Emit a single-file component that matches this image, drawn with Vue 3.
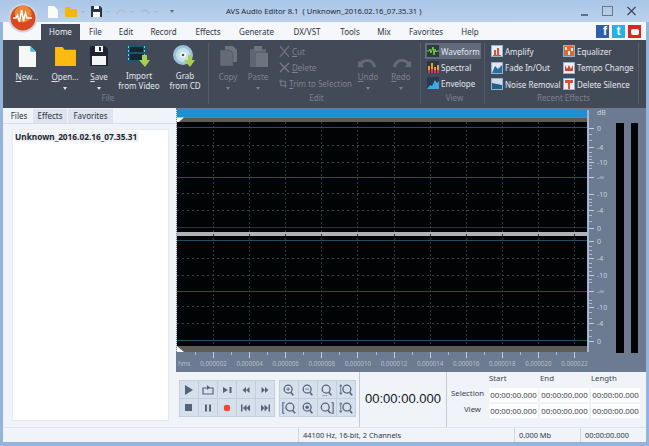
<template>
  <div class="window">
    <header class="titlebar">
      <div class="logo">
        <svg width="30" height="30" viewBox="0 0 30 30">
          <circle cx="15" cy="15" r="14.500" fill="#c9d6e6" />
          <circle cx="15" cy="15" r="12.500" fill="#d9481f" />
          <circle cx="15" cy="11" r="8.500" fill="#f2a244" opacity="0.7" />
          <path d="M5 15h3l1.500-3 2 7 2-12 2 11 2-8 1.500 5h5" fill="none" stroke="#fff" stroke-width="1.500" />
        </svg>
      </div>
      <div class="qat">
        <svg width="10" height="12" viewBox="0 0 10 12"><path d="M0 0h6l4 4v8H0z" fill="#fbfbf6" /></svg>
        <svg class="qat-folder" width="12" height="10" viewBox="0 0 12 10"><path d="M0 0h5l1 2h6v8H0z" fill="#f5b800" /></svg>
        <span class="qat-arrow light"></span>
        <svg class="qat-save" width="11" height="11" viewBox="0 0 11 11"><path d="M0 0h9l2 2v9H0z" fill="#2c3442" /><path d="M3 0h5v3H3zM2 6h7v5H2z" fill="#fff" /></svg>
        <span class="qat-arrow light"></span>
        <svg class="qat-undo" width="10" height="7" viewBox="0 0 10 7"><path d="M1 6c1-4 5-5 8-2" fill="none" stroke="#a9bdd8" stroke-width="1.500" /></svg>
        <span class="qat-arrow light"></span>
        <svg class="qat-undo" width="10" height="7" viewBox="0 0 10 7"><path d="M9 6C8 2 4 1 1 4" fill="none" stroke="#a9bdd8" stroke-width="1.500" /></svg>
        <span class="qat-arrow light"></span>
        <span class="qat-arrow end"></span>
      </div>
      <div class="title">AVS Audio Editor 8.1&nbsp; ( Unknown_2016.02.16_07.35.31 )</div>
      <div class="winbtns">
        <svg width="9" height="12" viewBox="0 0 9 12"><path d="M1 10h7" stroke="#44505f" stroke-width="1.500" /></svg>
        <svg width="11" height="12" viewBox="0 0 11 12"><rect x="0.500" y="1.500" width="10" height="9" fill="none" stroke="#6a7888" /></svg>
        <svg width="11" height="12" viewBox="0 0 11 12"><path d="M1.500 2l8 8M9.500 2l-8 8" stroke="#3c4655" stroke-width="1.200" /></svg>
      </div>
    </header>

    <nav class="tabs">
      <span v-for="t in menuTabs" :key="t.name" class="tab" :class="{ active: t.name === 'Home' }" :style="{ width: t.w + 'px' }">{{ t.name }}</span>
      <div class="social">
        <span class="soc fb">f</span>
        <span class="soc tw">t</span>
        <span class="soc yt"><i></i></span>
      </div>
    </nav>

    <section class="ribbon">
      <div class="group g-file">
        <div class="group-body">
          <div v-for="b in fileBtns" :key="b.label" class="big" :style="{ width: b.w + 'px' }">
            <div class="big-icon">
              <svg v-if="b.icon === 'new'" width="18" height="21" viewBox="0 0 19 22"><path d="M1 0h12l6 6v16H1z" fill="#f6f7f7" /><path d="M13 0l6 6h-6z" fill="#48b4e6" /></svg>
              <svg v-if="b.icon === 'open'" width="21" height="19" viewBox="0 0 22 20"><path d="M0 0h8l2 3h12v17H0z" fill="#fdbb12" /></svg>
              <svg v-if="b.icon === 'save'" width="18" height="20" viewBox="0 0 18 20"><path d="M1 0h14l3 3v17H0V1z" fill="#1f2530" /><path d="M5 0h8v6H5z" fill="#f4f4f4" /><path d="M9 1h2v4H9z" fill="#1f2530" /><path d="M2 10h14v9H2z" fill="#f4f4f4" /></svg>
              <svg v-if="b.icon === 'video'" width="24" height="22" viewBox="0 0 24 22"><path d="M0 0h19v17H0z" fill="#17586f" /><path d="M3 2h13v5H3zM3 9h13v6H3z" fill="#16282f" /><path d="M1 1h1v2H1zM1 5h1v2H1zM1 9h1v2H1zM1 13h1v2H1zM17 1h1v2h-1zM17 5h1v2h-1zM17 9h1v2h-1zM17 13h1v2h-1z" fill="#6fd0e8" /><path d="M15 10h5v5h3l-5 7-6-7h3z" fill="#a8cf52" /></svg>
              <svg v-if="b.icon === 'cd'" width="24" height="22" viewBox="0 0 24 22"><circle cx="10" cy="10" r="10" fill="#9ac4d4" /><circle cx="10" cy="10" r="7" fill="#c4e0ea" /><circle cx="10" cy="10" r="3" fill="#f6f8f8" /><circle cx="10" cy="10" r="1.300" fill="#3f5a66" /><path d="M15 10h4v5h3l-5 7-6-7h4z" fill="#a8cf52" /></svg>
            </div>
            <div class="big-label"><u v-if="b.ul">{{ b.label[0] }}</u><template v-else>{{ b.label[0] }}</template>{{ b.label.slice(1) }}<template v-if="b.second"><br />{{ b.second }}</template></div>
            <span v-if="b.arrow" class="drop"></span>
          </div>
        </div>
        <div class="group-name">File</div>
      </div>

      <div class="group g-edit">
        <div class="group-body">
          <div class="big off" style="width: 30px">
            <div class="big-icon">
              <svg width="17" height="20" viewBox="0 0 17 20"><path d="M5 0h8l4 4v12H5z" fill="#6d737f" /><path d="M0 4h10l3 3v13H0z" fill="#646a76" stroke="#4e5461" stroke-width="0.700" /></svg>
            </div>
            <div class="big-label">Copy</div>
            <span class="drop"></span>
          </div>
          <div class="big off" style="width: 30px">
            <div class="big-icon">
              <svg width="20" height="21" viewBox="0 0 20 21"><path d="M2 3h16v18H2z" fill="#5f6571" /><path d="M6 0h8v5H6z" fill="#6d737f" /><path d="M8 7h12v14H8z" fill="#6d737f" /></svg>
            </div>
            <div class="big-label">Paste</div>
            <span class="drop"></span>
          </div>
          <div class="small-col edit-col">
            <div class="small off"><svg width="11" height="11" viewBox="0 0 11 11"><path d="M1 0l9 11M10 0L1 11" stroke="#6d737f" stroke-width="1.200" /></svg><span><u>C</u>ut</span></div>
            <div class="small off"><svg width="11" height="11" viewBox="0 0 11 11"><path d="M1 1l9 9M10 1l-9 9" stroke="#757c88" stroke-width="1.400" /></svg><span><u>D</u>elete</span></div>
            <div class="small off"><svg width="11" height="11" viewBox="0 0 11 11"><path d="M2.500 0v8.500H11M0 2.500h8.500V11" fill="none" stroke="#757c88" stroke-width="1.400" /></svg><span><u>T</u>rim to Selection</span></div>
          </div>
          <div class="big off undo" style="width: 32px">
            <div class="big-icon">
              <svg width="20" height="14" viewBox="0 0 20 14"><path d="M2 13C3 6 11 2 18 8l2-1v6h-6l2-3C11 6 6 8 5 13z" fill="#656b77" transform="matrix(-1 0 0 1 20 0)" /></svg>
            </div>
            <div class="big-label"><u>U</u>ndo</div>
            <span class="drop"></span>
          </div>
          <div class="big off undo" style="width: 34px">
            <div class="big-icon">
              <svg width="20" height="14" viewBox="0 0 20 14"><path d="M2 13C3 6 11 2 18 8l2-1v6h-6l2-3C11 6 6 8 5 13z" fill="#656b77" /></svg>
            </div>
            <div class="big-label"><u>R</u>edo</div>
            <span class="drop"></span>
          </div>
        </div>
        <div class="group-name">Edit</div>
      </div>

      <div class="group g-view">
        <div class="group-body">
          <div class="small-col">
            <div class="small on">
              <svg width="12" height="12" viewBox="0 0 12 12"><rect width="12" height="12" fill="#2c3a42" /><path d="M0 6h2l1-2 1 4 2-6 1 8 1-6 1 3 1-1h2" fill="none" stroke="#7fd044" /></svg>
              <span>Waveform</span>
            </div>
            <div class="small">
              <svg width="12" height="12" viewBox="0 0 12 12"><rect width="12" height="12" fill="#2f3542" /><path d="M1 12V5h2v7zM4 12V2h2v10zM7 12V6h2v6zM10 12V4h2v8z" fill="#e8a030" /><path d="M1 12V9h2v3zM4 12V8h2v4zM7 12V9h2v3zM10 12V9h2v3z" fill="#d83a5a" /></svg>
              <span>Spectral</span>
            </div>
            <div class="small">
              <svg width="12" height="12" viewBox="0 0 12 12"><rect width="12" height="12" fill="#263a52" /><path d="M0 12l3-4 2 1 3-6 2 3 2-2v8z" fill="#3ea8e0" /></svg>
              <span>Envelope</span>
            </div>
          </div>
        </div>
        <div class="group-name">View</div>
      </div>

      <div class="group g-recent">
        <div class="group-body recent-grid">
          <div v-for="fx in recentFx" :key="fx.name" class="small fx">
            <svg width="12" height="12" viewBox="0 0 12 12">
              <rect x="0.500" y="0.500" width="11" height="11" :fill="fx.bg" stroke="#8fb4d4" />
              <path :d="fx.d" :fill="fx.color" />
            </svg>
            <span>{{ fx.name }}</span>
          </div>
        </div>
        <div class="group-name">Recent Effects</div>
      </div>
    </section>

    <main class="main">
      <aside class="left">
        <div class="left-tabs">
          <span class="ltab active">Files</span>
          <span class="ltab effects">Effects</span>
          <span class="ltab favs">Favorites</span>
        </div>
        <div class="file-list">
          <span class="file-item">Unknown_2016.02.16_07.35.31</span>
        </div>
      </aside>

      <div class="right">
        <svg class="scope" width="470" height="264" viewBox="176 108 470 264">
          <rect x="176" y="108" width="470" height="264" fill="#6d7b92" />
          <rect x="177" y="110" width="410" height="7" fill="#1d8fd2" />
          <rect x="177" y="118" width="410" height="4" fill="#5d5b58" />
          <path d="M177 117.500l7 0-7 6z" fill="#fff" />
          <rect x="177" y="122" width="410" height="224" fill="#020304" />
          <rect x="177" y="227" width="410" height="1" fill="#25343c" />
          <rect x="177" y="232" width="410" height="4" fill="#b0b2b6" />
          <rect x="177" y="346" width="410" height="6" fill="#5d5b58" />
          <path d="M177 346l7 6h-7z" fill="#fff" />

          <line v-for="x in gridX" :key="'v' + x" :x1="x" :x2="x" y1="122" y2="346" stroke="#2a3a3e" stroke-dasharray="2 2" />
          <line v-for="y in gridY" :key="'h' + y" x1="177" x2="587" :y1="y" :y2="y" stroke="#3a4044" stroke-dasharray="2 3" />
          <line v-for="y in solidY" :key="'s' + y" x1="177" x2="587" :y1="y + 0.5" :y2="y + 0.5" stroke="#1f4f63" />
          <line x1="176.500" x2="176.500" y1="110" y2="352" stroke="#e8eef4" stroke-dasharray="1 1" />

          <rect x="587" y="110" width="2" height="242" fill="#9fb6d8" />
          <g v-for="d in dbMarks" :key="'d' + d.y">
            <line x1="589" x2="594" :y1="d.y + 0.5" :y2="d.y + 0.5" stroke="#c3ccd8" />
            <text x="597" :y="d.y + 3" class="db">{{ d.t }}</text>
          </g>
          <line v-for="y in dbTicks" :key="'dt' + y" x1="589" x2="592" :y1="y + 0.5" :y2="y + 0.5" stroke="#aeb8c6" />
          <text x="597" y="115" class="db">dB</text>
          <rect x="616" y="123" width="8" height="230" fill="#020304" />
          <rect x="631" y="123" width="7" height="230" fill="#020304" />

          <line v-for="x in gridX" :key="'r' + x" :x1="x" :x2="x" y1="352" y2="358" stroke="#c3ccd8" />
          <line v-for="x in gridX" :key="'rh' + x" :x1="x - 18" :x2="x - 18" y1="352" y2="355" stroke="#aeb8c6" />
          <text x="178" y="366" class="ruler">hms</text>
          <text v-for="(l, i) in rulerLabels" :key="l" :x="213.500 + i * 36.100" y="366" class="ruler" text-anchor="middle">{{ l }}</text>
        </svg>

        <div class="transport">
          <div class="btn-grid five">
            <button v-for="b in playBtns" :key="b.k" class="tbtn" type="button">
              <svg width="14" height="14" viewBox="0 0 14 14" v-html="b.svg"></svg>
            </button>
          </div>
          <div class="btn-grid four">
            <button v-for="b in zoomBtns" :key="b.k" class="tbtn" type="button">
              <svg width="14" height="14" viewBox="0 0 16 16" v-html="b.svg"></svg>
            </button>
          </div>
          <div class="clock">00:00:00.000</div>
          <div class="times">
            <span></span><span class="th">Start</span><span class="th">End</span><span class="th">Length</span>
            <span class="rl">Selection</span><span class="tf">00:00:00.000</span><span class="tf">00:00:00.000</span><span class="tf">00:00:00.000</span>
            <span class="rl">View</span><span class="tf">00:00:00.000</span><span class="tf">00:00:00.000</span><span class="tf">00:00:00.000</span>
          </div>
        </div>
      </div>
    </main>

    <footer class="status">
      <span class="st st1"></span>
      <span class="st st2">44100 Hz, 16-bit, 2 Channels</span>
      <span class="st st3">0.000 Mb</span>
      <span class="st st4">00:00:00.000</span>
    </footer>
  </div>
</template>

<script setup>
const menuTabs = [
  { name: 'Home', w: 39 }, { name: 'File', w: 31 }, { name: 'Edit', w: 30 }, { name: 'Record', w: 45 },
  { name: 'Effects', w: 44 }, { name: 'Generate', w: 53 }, { name: 'DX/VST', w: 48 }, { name: 'Tools', w: 38 },
  { name: 'Mix', w: 30 }, { name: 'Favorites', w: 54 }, { name: 'Help', w: 34 },
]

const fileBtns = [
  { label: 'New...', icon: 'new', w: 38, ul: true },
  { label: 'Open...', icon: 'open', w: 38, arrow: true, ul: true },
  { label: 'Save', icon: 'save', w: 30, arrow: true, ul: true },
  { label: 'Import', second: 'from Video', icon: 'video', w: 50 },
  { label: 'Grab', second: 'from CD', icon: 'cd', w: 42 },
]

const recentFx = [
  { name: 'Amplify', bg: '#e8eef4', color: '#d8503a', d: 'M3 10V5h2v5zM6 10V3h2v7zM2 10h8v1H2z' },
  { name: 'Equalizer', bg: '#e06a30', color: '#f4efe4', d: 'M2 2h2v3H2zM5 6h2v4H5zM8 3h2v3H8z' },
  { name: 'Fade In/Out', bg: '#dfe8f0', color: '#2a6c9c', d: 'M1 11l3-7 3 3 4-4v8z' },
  { name: 'Tempo Change', bg: '#f0f2f4', color: '#d8403a', d: 'M2 9V3l2 4 2-4 2 4 2-4v6z' },
  { name: 'Noise Removal', bg: '#cfdde8', color: '#245f88', d: 'M1 5l10 2v4H1z' },
  { name: 'Delete Silence', bg: '#eef0f2', color: '#e0503a', d: 'M2 2h8v3H7v6H5V5H2z' },
]

const gridX = Array.from({ length: 11 }, (_, i) => Math.round(213 + i * 36.1) + 0.5)
const gridY = [145.5, 162.5, 193.5, 210.5, 258.5, 275.5, 306.5, 323.5]
const solidY = [127, 177, 240, 291, 340]
const dbMarks = [
  { y: 128, t: '0' }, { y: 147, t: '-4' }, { y: 162, t: '-10' }, { y: 177, t: '-∞' }, { y: 194, t: '-10' }, { y: 210, t: '-4' }, { y: 228, t: '0' },
  { y: 241, t: '0' }, { y: 258, t: '-4' }, { y: 275, t: '-10' }, { y: 291, t: '-∞' }, { y: 307, t: '-10' }, { y: 323, t: '-4' }, { y: 341, t: '0' },
]
const dbTicks = [134, 140, 152, 156, 159, 165, 168, 199, 202, 205, 215, 221, 246, 250, 254, 263, 267, 271, 279, 282, 300, 303, 312, 318, 330, 336]
const rulerLabels = Array.from({ length: 11 }, (_, i) => '0.0000' + String((i + 1) * 2).padStart(2, '0'))

const ic = '#55637a'
const playBtns = [
  { k: 'play', svg: `<path d="M3 2l8 5-8 5z" fill="${ic}"/>` },
  { k: 'loop', svg: `<path d="M2 5h10v6H2z" fill="none" stroke="${ic}" stroke-width="1.200"/><path d="M6 2v5l3-2.500z" fill="${ic}"/>` },
  { k: 'next', svg: `<path d="M3 4l5 3-5 3z M9.500 4h2v6h-2z" fill="${ic}"/>` },
  { k: 'rew', svg: `<path d="M7 4v6L3.500 7zM10.500 4v6L7 7z" fill="${ic}"/>` },
  { k: 'ffw', svg: `<path d="M3.500 4v6L7 7zM7 4v6l3.500-3z" fill="${ic}"/>` },
  { k: 'stop', svg: `<path d="M3 3h7v7H3z" fill="${ic}"/>` },
  { k: 'pause', svg: `<path d="M4 3.500h2v7H4zM8 3.500h2v7H8z" fill="${ic}"/>` },
  { k: 'rec', svg: `<circle cx="7" cy="7" r="3.200" fill="#f2472a"/>` },
  { k: 'first', svg: `<path d="M2 3.500h1.500v7H2zM7.500 3.500v7L4 7zM11 3.500v7L7.500 7z" fill="${ic}"/>` },
  { k: 'last', svg: `<path d="M12 3.500h-1.500v7H12zM3 3.500v7L6.500 7zM6.500 3.500v7L10 7z" fill="${ic}"/>` },
]

const lens = (cx, extra = '') => `<circle cx="${cx}" cy="7" r="4.500" fill="none" stroke="${ic}" stroke-width="1.500"/><path d="M${cx + 3} 10.500l3 3.500" stroke="${ic}" stroke-width="1.800"/>${extra}`
const zoomBtns = [
  { k: 'in', svg: lens(7, `<path d="M5 7h4M7 5v4" stroke="${ic}"/>`) },
  { k: 'out', svg: lens(7, `<path d="M5 7h4" stroke="${ic}"/>`) },
  { k: 'sel', svg: lens(7, `<path d="M3 14.500h6" stroke="${ic}" stroke-dasharray="1 1"/>`) },
  { k: 'vert', svg: lens(9, `<path d="M2 2v11M0.500 4L2 2l1.500 2M0.500 11L2 13l1.500-2" fill="none" stroke="${ic}"/>`) },
  { k: 'left', svg: lens(9, `<path d="M3 2H1v12h2" fill="none" stroke="${ic}" stroke-width="1.300"/>`) },
  { k: 'all', svg: lens(7, `<circle cx="7" cy="7" r="2" fill="${ic}"/>`) },
  { k: 'right', svg: lens(6, `<path d="M13 2h2v12h-2" fill="none" stroke="${ic}" stroke-width="1.300"/>`) },
  { k: 'vert2', svg: lens(9, `<path d="M2 2v11M0.500 4L2 2l1.500 2M0.500 11L2 13l1.500-2" fill="none" stroke="${ic}"/>`) },
]
</script>

<style scoped>
.window {
  width: 649px;
  height: 446px;
  box-sizing: border-box;
  display: flex;
  flex-direction: column;
  background: #93b4dc;
  padding: 0 3px 4px;
  font-family: "Noto Sans", "Open Sans", sans-serif;
  font-size: 8px;
  color: #2a3340;
  overflow: hidden;
}
.titlebar {
  height: 22px;
  display: flex;
  align-items: center;
  position: relative;
  margin: 0 -3px;
  background: linear-gradient(#a9c5e7, #bcd2ec);
}
.logo {
  position: absolute;
  left: 8px;
  top: 3px;
  z-index: 2;
  height: 30px;
}
.qat {
  display: flex;
  align-items: center;
  margin-left: 48px;
  width: 150px;
  margin-top: 1px;
}
.qat-folder { margin-left: 7px; }
.qat-save { margin-left: 6px; }
.qat-undo { margin-left: 6px; }
.qat-arrow {
  width: 0;
  height: 0;
  margin-left: 4px;
  border-left: 2px solid transparent;
  border-right: 2px solid transparent;
  border-top: 2px solid #7d8ea6;
}
.qat-arrow.light { border-top-color: #a0b6d4; }
.qat-arrow.end { margin-left: 12px; border-top-color: #5e6c7e; border-left-width: 2px; border-right-width: 2px; border-top-width: 3px; }
.title {
  position: absolute;
  left: 226px;
  top: 5px;
  font-size: 7.650px;
  line-height: 12px;
  white-space: nowrap;
  color: #1f2835;
}
.winbtns {
  margin-left: auto;
  margin-right: 12px;
  display: flex;
  gap: 13px;
  align-items: center;
}
.tabs {
  height: 18px;
  display: flex;
  background: #f5f7fb;
  padding-left: 38px;
  align-items: stretch;
}
.tab {
  text-align: center;
  line-height: 15px;
  margin-top: 2px;
  color: #2d3644;
}
.tab.active {
  background: #434a57;
  color: #eef1f5;
}
.social {
  margin-left: auto;
  margin-right: 5px;
  display: flex;
  gap: 3px;
  padding-top: 3px;
}
.soc {
  width: 13px;
  height: 13px;
  color: #fff;
  font: bold 12px/13px "Liberation Sans", sans-serif;
  text-align: center;
}
.fb { background: #2f5fa8; text-align: right; padding-right: 2px; width: 11px; }
.tw { background: #22b4e8; }
.yt { background: #e0261c; display: flex; align-items: center; justify-content: center; }
.yt i { width: 8px; height: 6px; background: #fff; border-radius: 2px; }
.ribbon {
  height: 68px;
  display: flex;
  background: #434a57;
  box-sizing: border-box;
  padding: 3px 0 4px;
  color: #e4e8ee;
}
.group {
  display: flex;
  flex-direction: column;
  border-right: 1px solid #555c69;
  box-sizing: border-box;
}
.g-file { width: 206px; padding-left: 5px; }
.g-edit { width: 212px; padding-left: 4px; }
.g-view { width: 64px; padding-left: 4px; }
.g-recent { width: 154px; padding-left: 4px; }
.group-body {
  flex: 1;
  display: flex;
  min-height: 0;
}
.group-name {
  height: 13px;
  line-height: 13px;
  text-align: center;
  color: #78808d;
  font-size: 8px;
}
.big {
  display: flex;
  flex-direction: column;
  align-items: center;
  line-height: 10px;
  white-space: nowrap;
  text-align: center;
}
.big-icon {
  height: 24px;
  display: flex;
  align-items: center;
  justify-content: center;
  margin-top: 1px;
  margin-bottom: 4px;
}
.undo .big-icon { align-items: flex-end; }
.off { color: #7b828e; }
.drop {
  width: 0;
  height: 0;
  margin-top: 5px;
  border-left: 2px solid transparent;
  border-right: 2px solid transparent;
  border-top: 3px solid currentColor;
}
.small-col {
  display: flex;
  flex-direction: column;
}
.edit-col { width: 75px; margin-left: 4px; }
.small {
  height: 16.500px;
  display: flex;
  align-items: center;
  gap: 2px;
  white-space: nowrap;
  padding-left: 2px;
  box-sizing: border-box;
}
.small.on { background: #616b7b; width: 56px; }
.recent-grid {
  display: grid;
  grid-template-columns: 72px 76px;
  grid-auto-rows: 16.500px;
}
.main {
  flex: 1;
  display: flex;
  min-height: 0;
  background: #f0f3f8;
}
.left {
  width: 173px;
  display: flex;
  flex-direction: column;
  padding-top: 1px;
}
.left-tabs {
  height: 14px;
  display: flex;
  padding-left: 2px;
  border-bottom: 1px solid #d8dfe9;
}
.ltab {
  width: 28px;
  text-align: center;
  line-height: 14px;
  background: #dde4ef;
}
.ltab.effects { width: 34px; margin-right: 1px; }
.ltab.favs { width: 45px; }
.ltab.active { background: #f0f3f8; }
.file-list {
  margin: 5px 7px 6px 9px;
  flex: 1;
  background: #fff;
  border: 1px solid #e6eaf1;
  padding: 1px 2px;
}
.file-item {
  display: block;
  width: 124px;
  background: #f1f2f5;
  font-weight: 700;
  font-size: 8.300px;
  line-height: 11px;
  white-space: nowrap;
  color: #20262f;
}
.right {
  flex: 1;
  display: flex;
  flex-direction: column;
  min-width: 0;
}
.scope {
  display: block;
  flex: none;
}
.db {
  font-size: 7px;
  fill: #c9d1dc;
}
.ruler {
  font-size: 6.200px;
  fill: #b4becb;
}
.transport {
  flex: 1;
  display: flex;
  align-items: flex-start;
  background: #f0f3f8;
}
.btn-grid {
  display: grid;
  margin-top: 8px;
  background: #c4cfde;
  gap: 1px;
  padding: 1px;
  grid-auto-rows: 17px;
}
.five { margin-left: 3px; grid-template-columns: repeat(5, 18px); }
.four { margin-left: 4px; grid-template-columns: repeat(4, 18px); }
.tbtn {
  border: 0;
  padding: 0;
  background: #d6dfec;
  display: flex;
  align-items: center;
  justify-content: center;
}
.clock {
  margin-left: 3px;
  width: 86px;
  height: 56px;
  border-left: 1px solid #c4cad3;
  border-right: 1px solid #c4cad3;
  font: 13px/54px "Liberation Sans", sans-serif;
  color: #10151c;
  text-align: center;
}
.times {
  display: grid;
  grid-template-columns: 36px 49px 49px 49px;
  grid-template-rows: 12px 14px 14px;
  margin: 2px 0 0 4px;
  row-gap: 2px;
  column-gap: 2px;
  font-size: 7.800px;
  color: #39424f;
}
.th { line-height: 8px; }
.rl { text-align: right; line-height: 10px; white-space: nowrap; padding-right: 6px; }
.tf {
  background: #fff;
  line-height: 14px;
  text-align: center;
  white-space: nowrap;
}
.status {
  height: 15px;
  display: flex;
  background: #f0f3f8;
  border-top: 1px solid #dfe4ec;
  box-sizing: border-box;
  font-size: 7.400px;
  line-height: 14px;
  color: #2f3845;
  white-space: nowrap;
}
.st { box-sizing: border-box; padding-left: 4px; }
.st1 { width: 295px; }
.st2 { width: 216px; border-left: 1px solid #d2d8e1; }
.st3 { width: 66px; border-left: 1px solid #d2d8e1; }
.st4 { flex: 1; border-left: 1px solid #d2d8e1; }
</style>
